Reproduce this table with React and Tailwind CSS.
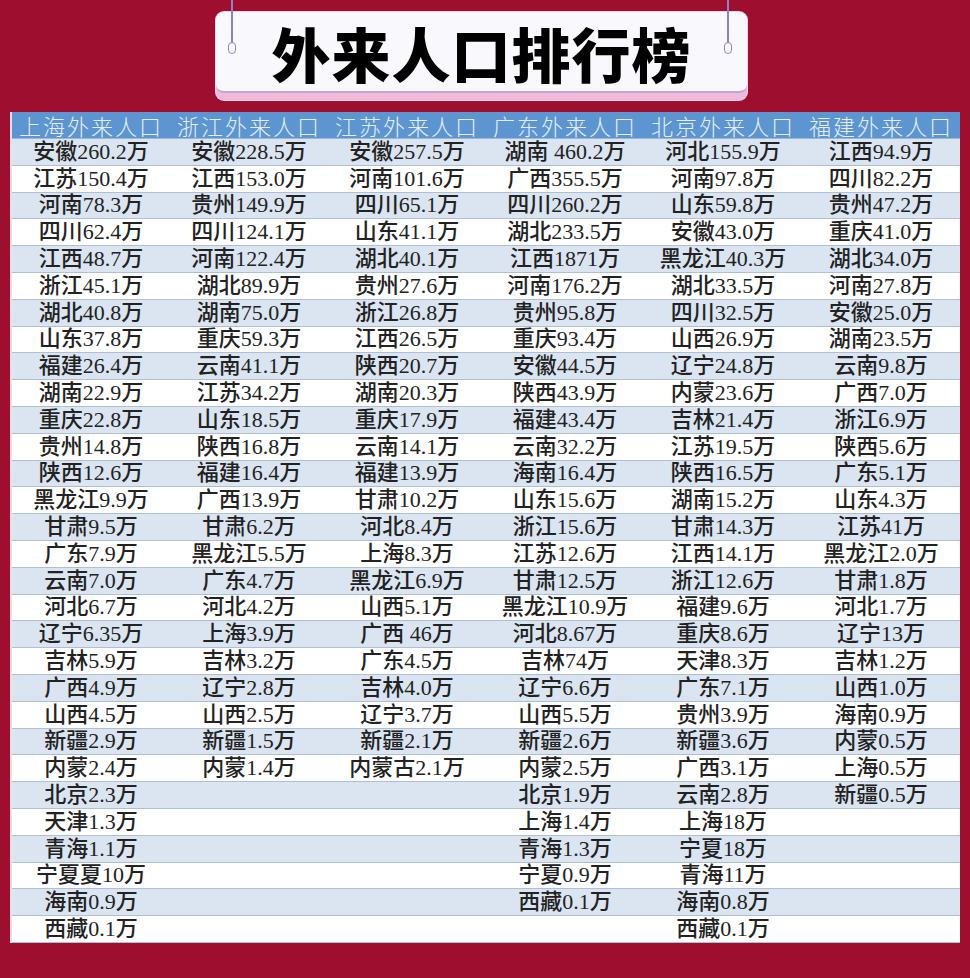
const COLS = [
  {
    title: '上海外来人口',
    items: ['安徽260.2万', '江苏150.4万', '河南78.3万', '四川62.4万', '江西48.7万', '浙江45.1万', '湖北40.8万', '山东37.8万', '福建26.4万', '湖南22.9万', '重庆22.8万', '贵州14.8万', '陕西12.6万', '黑龙江9.9万', '甘肃9.5万', '广东7.9万', '云南7.0万', '河北6.7万', '辽宁6.35万', '吉林5.9万', '广西4.9万', '山西4.5万', '新疆2.9万', '内蒙2.4万', '北京2.3万', '天津1.3万', '青海1.1万', '宁夏夏10万', '海南0.9万', '西藏0.1万'],
  },
  {
    title: '浙江外来人口',
    items: ['安徽228.5万', '江西153.0万', '贵州149.9万', '四川124.1万', '河南122.4万', '湖北89.9万', '湖南75.0万', '重庆59.3万', '云南41.1万', '江苏34.2万', '山东18.5万', '陕西16.8万', '福建16.4万', '广西13.9万', '甘肃6.2万', '黑龙江5.5万', '广东4.7万', '河北4.2万', '上海3.9万', '吉林3.2万', '辽宁2.8万', '山西2.5万', '新疆1.5万', '内蒙1.4万'],
  },
  {
    title: '江苏外来人口',
    items: ['安徽257.5万', '河南101.6万', '四川65.1万', '山东41.1万', '湖北40.1万', '贵州27.6万', '浙江26.8万', '江西26.5万', '陕西20.7万', '湖南20.3万', '重庆17.9万', '云南14.1万', '福建13.9万', '甘肃10.2万', '河北8.4万', '上海8.3万', '黑龙江6.9万', '山西5.1万', '广西 46万', '广东4.5万', '吉林4.0万', '辽宁3.7万', '新疆2.1万', '内蒙古2.1万'],
  },
  {
    title: '广东外来人口',
    items: ['湖南 460.2万', '广西355.5万', '四川260.2万', '湖北233.5万', '江西1871万', '河南176.2万', '贵州95.8万', '重庆93.4万', '安徽44.5万', '陕西43.9万', '福建43.4万', '云南32.2万', '海南16.4万', '山东15.6万', '浙江15.6万', '江苏12.6万', '甘肃12.5万', '黑龙江10.9万', '河北8.67万', '吉林74万', '辽宁6.6万', '山西5.5万', '新疆2.6万', '内蒙2.5万', '北京1.9万', '上海1.4万', '青海1.3万', '宁夏0.9万', '西藏0.1万'],
  },
  {
    title: '北京外来人口',
    items: ['河北155.9万', '河南97.8万', '山东59.8万', '安徽43.0万', '黑龙江40.3万', '湖北33.5万', '四川32.5万', '山西26.9万', '辽宁24.8万', '内蒙23.6万', '吉林21.4万', '江苏19.5万', '陕西16.5万', '湖南15.2万', '甘肃14.3万', '江西14.1万', '浙江12.6万', '福建9.6万', '重庆8.6万', '天津8.3万', '广东7.1万', '贵州3.9万', '新疆3.6万', '广西3.1万', '云南2.8万', '上海18万', '宁夏18万', '青海11万', '海南0.8万', '西藏0.1万'],
  },
  {
    title: '福建外来人口',
    items: ['江西94.9万', '四川82.2万', '贵州47.2万', '重庆41.0万', '湖北34.0万', '河南27.8万', '安徽25.0万', '湖南23.5万', '云南9.8万', '广西7.0万', '浙江6.9万', '陕西5.6万', '广东5.1万', '山东4.3万', '江苏41万', '黑龙江2.0万', '甘肃1.8万', '河北1.7万', '辽宁13万', '吉林1.2万', '山西1.0万', '海南0.9万', '内蒙0.5万', '上海0.5万', '新疆0.5万'],
  },
];

const ROWS = 30;

function Pin({ className }) {
  return (
    <div className={`absolute top-[-12px] flex flex-col items-center ${className}`}>
      <div className="w-[1.5px] h-[44px] bg-[#8d7fc9]" />
      <div className="w-[8px] h-[12px] rounded-full border-[1.5px] border-[#8d7fc9] bg-white -mt-[2px]" />
    </div>
  );
}

function TitleCard() {
  return (
    <div className="relative ml-[216px] mt-[12px] w-[531px]">
      <div className="rounded-[8px] bg-[#f3b9d9] pb-[7px] shadow-[0_0_0_1px_#e9d7ec]">
        <div className="h-[81px] rounded-[8px] bg-[#f9f8fc] border-b-[2px] border-[#b7a8dc] flex items-center justify-center">
          <h1 className="text-[59px] leading-none font-black text-black tracking-[1px] mt-[2px]" style={{ fontFamily: '"Noto Sans CJK SC", sans-serif' }}>
            外来人口排行榜
          </h1>
        </div>
      </div>
      <Pin className="left-[12px]" />
      <Pin className="left-[508px]" />
    </div>
  );
}

export default function App() {
  const rows = Array.from({ length: ROWS }, (_, i) => i);
  return (
    <div className="w-[970px] h-[978px] bg-[#9e0f2f] overflow-hidden flex flex-col">
      <TitleCard />

      <div className="mt-[12px] mx-[10px] w-[950px] bg-white border-l-[2px] border-[#f4dde3]">
        <div className="grid grid-cols-6 h-[27px] bg-[#5d95d0] border-b border-[#9db6d4]">
          {COLS.map(c => (
            <div key={c.title} className="flex items-center justify-center text-[22px] leading-none text-[#e4eef9] tracking-[2px]" style={{ fontFamily: '"Noto Sans CJK SC", sans-serif', fontWeight: 300 }}>
              {c.title}
            </div>
          ))}
        </div>
        {rows.map(i => (
          <div key={i} className={`grid grid-cols-6 h-[26.8px] border-b border-[#aebfd6] ${i % 2 === 0 ? 'bg-[#dbe5f1]' : 'bg-white'}`}>
            {COLS.map(c => (
              <div key={c.title} className="flex items-center justify-center text-[22px] leading-none text-[#222] whitespace-pre" style={{ fontFamily: '"Liberation Serif", "Noto Sans CJK SC", serif', fontWeight: 500 }}>
                {c.items[i] || ''}
              </div>
            ))}
          </div>
        ))}
      </div>
    </div>
  );
}
